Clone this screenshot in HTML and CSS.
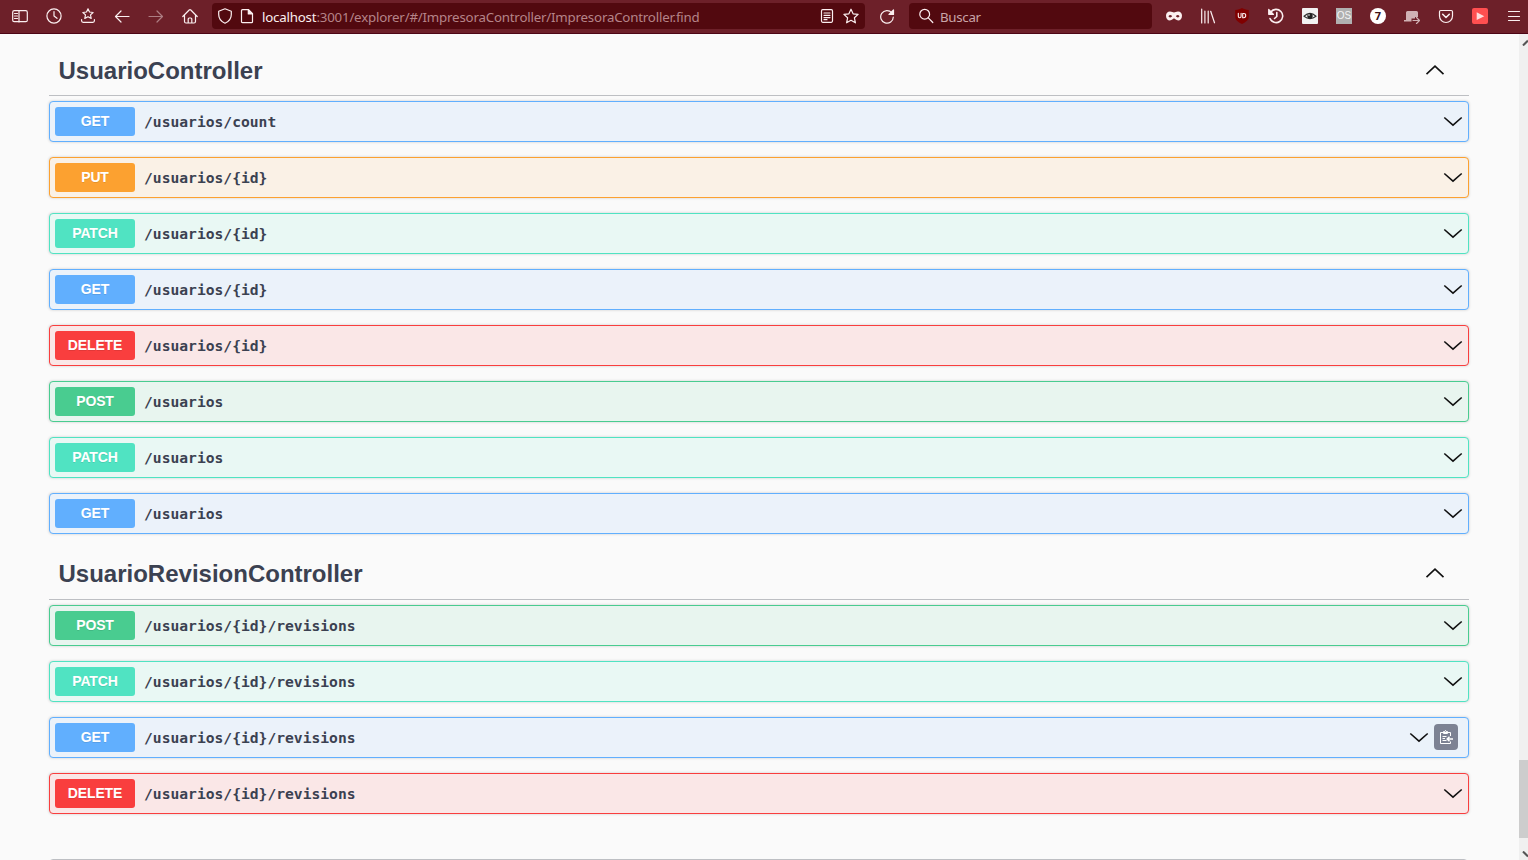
FILE: index.html
```
<!DOCTYPE html>
<html lang="es">
<head>
<meta charset="utf-8">
<title>LoopBack API Explorer</title>
<link rel="stylesheet" href="styles.css">
</head>
<body>
<svg class="defs" aria-hidden="true">
  <symbol id="down" viewBox="0 0 20 12"><path d="M1.300 1.500 10 9.200 18.700 1.500"/></symbol>
  <symbol id="up" viewBox="0 0 20 12"><path d="M1.500 10.200 10 2.200l8.500 8"/></symbol>
</svg>
<header class="toolbar">
  <nav class="tools">
    <span class="tool"><svg class="icon" viewBox="0 0 16 16"><rect x=".7" y="2.700" width="14.600" height="11" rx="1.500"/><path d="M7 3v11M2.500 5.500h3M2.500 8h3M2.500 10.500h3"/></svg></span>
    <span class="tool"><svg class="icon" viewBox="0 0 16 16"><circle cx="8" cy="8" r="7.100"/><path d="M8 3.500V8l3 2.300"/></svg></span>
    <span class="tool"><svg class="icon" viewBox="0 0 16 16"><path d="m8 .8 1.500 3.200 3.600.5-2.600 2.400.7 3.500L8 8.700l-3.200 1.700.7-3.500-2.600-2.400 3.600-.5zM1.600 11.500v1.300q0 1.500 1.500 1.500h9.800q1.500 0 1.500-1.500v-1.300"/></svg></span>
    <span class="tool"><svg class="icon" viewBox="0 0 16 16"><path d="M15 8.500H1.500M7 3 1.500 8.500 7 14"/></svg></span>
    <span class="tool tool-off"><svg class="icon" viewBox="0 0 16 16"><path d="M1 8.500h13.500M9 3l5.500 5.500L9 14"/></svg></span>
    <span class="tool"><svg class="icon" viewBox="0 0 16 16"><path d="M.8 8.500 7.200 2q.8-.7 1.600 0l6.400 6.500M2.500 7v6.500q0 1.500 1.500 1.500h8q1.500 0 1.500-1.500V7M6.200 15v-4q0-1 1-1h1.600q1 0 1 1v4"/></svg></span>
  </nav>
  <div class="address">
    <svg class="icon" viewBox="0 0 16 16"><path d="M8 .8 14.300 3.200v3.300c0 4-2.300 7-6.300 8.700-4-1.700-6.300-4.700-6.300-8.700V3.200z"/></svg>
    <svg class="icon page-icon" viewBox="0 0 16 16"><path d="M3.500 1.700h6l4 4v8q0 1-1 1h-9q-1 0-1-1v-11q0-1 1-1z"/><path class="solid" d="M9.300 1.700v4.200h4.200z"/></svg>
    <span class="url"><b>localhost</b>:3001/explorer/#/ImpresoraController/ImpresoraController.find</span>
    <svg class="icon" viewBox="0 0 16 16"><rect x="2.500" y="1.700" width="11" height="12.600" rx="1.200"/><path d="M5 5h6M5 7.300h6M5 9.600h6M5 11.700h3"/></svg>
    <svg class="icon star" viewBox="0 0 16 16"><path d="m8 1.200 2.100 4.600 5 .6-3.700 3.400 1 5L8 12.300l-4.400 2.500 1-5L.9 6.400l5-.6z"/></svg>
  </div>
  <span class="reload"><svg class="icon" viewBox="0 0 16 16"><path d="M12.800 4.800A6.300 6.300 0 1 0 14.300 9"/><path class="solid" d="M14.500 2v4.500H10z"/></svg></span>
  <div class="search">
    <svg class="icon" viewBox="0 0 16 16"><circle cx="6.700" cy="6.200" r="4.900"/><path d="m10.300 9.800 4.500 4.700"/></svg>
    <span>Buscar</span>
  </div>
  <nav class="tools extensions">
    <span class="tool"><svg class="icon" viewBox="0 0 16 16"><path class="mask" fill-rule="evenodd" d="M4 3.500c2 0 2.700 1 4 1s2-1 4-1c2.500 0 4 1.800 4 4.300 0 2.900-1.700 4.700-3.800 4.700C9.900 12.500 9.200 10.600 8 10.600S6.100 12.500 3.800 12.500C1.700 12.500 0 10.700 0 7.800 0 5.300 1.500 3.500 4 3.500zM2.400 8.200Q4.300 10.500 6.200 8.300 4.300 5.800 2.400 8.200zM9.800 8.300Q11.700 10.500 13.600 8.200 11.700 5.800 9.800 8.300z"/></svg></span>
    <span class="tool"><svg class="icon" viewBox="0 0 16 16"><path d="M1.700 1v14M4.900 3v12M8.200 3v12M10.700 3.300 14.500 14.800"/></svg></span>
    <span class="tool"><svg class="icon" viewBox="0 0 16 16"><path class="ublock" d="M8 0c2 1 4 1.800 6.800 2v6c0 4-2.500 5.800-6.800 8-4.300-2.200-6.800-4-6.800-8V2C4 1.800 6 1 8 0z"/><path class="thin" d="M4.300 5.300v3q0 1.500 1.400 1.500t1.400-1.500v-3M8.700 5.500v4.300h1q2 0 2-2.200t-2-2.100z"/></svg></span>
    <span class="tool"><svg class="icon" viewBox="0 0 16 16"><path class="bold" d="M2.800 4A6.600 6.600 0 1 1 2 10.500"/><path class="solid" d="M.7 1.500v4.800h4.800z"/><path class="bold" d="M8.800 4.500v4L6.500 10.500"/></svg></span>
    <span class="tool"><svg class="icon" viewBox="0 0 16 16"><rect class="eye-card" width="16" height="16" rx="1"/><path class="eye-line" d="M2 8.300Q8 2.500 14 8.300 8 13 2 8.300z"/><circle class="pupil" cx="8" cy="8" r="2.700"/><circle class="glint" cx="7" cy="7" r=".8"/></svg></span>
    <span class="tool"><span class="badge-os">OS</span></span>
    <span class="tool"><span class="badge-seven">7</span></span>
    <span class="tool"><svg class="icon faded" viewBox="0 0 16 16"><path class="mask" d="M2 4.500q0-1.500 1.500-1.500h9Q14 3 14 4.500V9h-3v1.500H7.500v3H0V12h2z"/><path d="M9 12.500h6M12.500 9.500l3 3-3 3"/></svg></span>
    <span class="tool"><svg class="icon" viewBox="0 0 16 16"><path d="M2.800 2.500h10.400q1.300 0 1.300 1.300V8a6.500 6.500 0 0 1-13 0V3.800q0-1.300 1.300-1.300z"/><path class="bold" d="M4.700 6.300 8 9.500l3.300-3.200"/></svg></span>
    <span class="tool"><svg class="icon" viewBox="0 0 16 16"><rect class="play-box" width="16" height="16" rx="2"/><path class="play" d="m4.700 4.300 7.600 3.900-7.600 3.900z"/></svg></span>
    <span class="tool"><svg class="icon" viewBox="0 0 16 16"><path d="M2.500 3.500h11M2.500 8.500h11M2.500 12.500h11"/></svg></span>
  </nav>
</header>
<div class="viewport">
  <main class="explorer">
    <section class="group">
      <h2 class="group-title">UsuarioController<svg class="arrow"><use href="#up"/></svg></h2>
      <div class="op get"><span class="method">GET</span><span class="path">/usuarios/count</span><svg class="arrow"><use href="#down"/></svg></div>
      <div class="op put"><span class="method">PUT</span><span class="path">/usuarios/{id}</span><svg class="arrow"><use href="#down"/></svg></div>
      <div class="op patch"><span class="method">PATCH</span><span class="path">/usuarios/{id}</span><svg class="arrow"><use href="#down"/></svg></div>
      <div class="op get"><span class="method">GET</span><span class="path">/usuarios/{id}</span><svg class="arrow"><use href="#down"/></svg></div>
      <div class="op delete"><span class="method">DELETE</span><span class="path">/usuarios/{id}</span><svg class="arrow"><use href="#down"/></svg></div>
      <div class="op post"><span class="method">POST</span><span class="path">/usuarios</span><svg class="arrow"><use href="#down"/></svg></div>
      <div class="op patch"><span class="method">PATCH</span><span class="path">/usuarios</span><svg class="arrow"><use href="#down"/></svg></div>
      <div class="op get"><span class="method">GET</span><span class="path">/usuarios</span><svg class="arrow"><use href="#down"/></svg></div>
    </section>
    <section class="group">
      <h2 class="group-title">UsuarioRevisionController<svg class="arrow"><use href="#up"/></svg></h2>
      <div class="op post"><span class="method">POST</span><span class="path">/usuarios/{id}/revisions</span><svg class="arrow"><use href="#down"/></svg></div>
      <div class="op patch"><span class="method">PATCH</span><span class="path">/usuarios/{id}/revisions</span><svg class="arrow"><use href="#down"/></svg></div>
      <div class="op get"><span class="method">GET</span><span class="path">/usuarios/{id}/revisions</span><svg class="arrow"><use href="#down"/></svg><span class="copy"><svg viewBox="0 0 16 16"><path d="M12.500 7V3.500H2.500v11h10v-2M5.500 4.500V2.500h1.300Q7.500.2 8.200 2.500h1.300v2zM4.500 7.500h4M4.500 9.500h2.500M4.500 11.500h4"/><path class="copy-arrow" d="M15 10H9.500M11.500 7.700 9.200 10l2.300 2.300"/></svg></span></div>
      <div class="op delete"><span class="method">DELETE</span><span class="path">/usuarios/{id}/revisions</span><svg class="arrow"><use href="#down"/></svg></div>
    </section>
    <div class="models"></div>
  </main>
  <aside class="scrollbar">
    <svg class="scroll-arrow" viewBox="0 0 9 9"><path d="M4 8.500 9 3.500"/></svg>
    <div class="thumb"></div>
    <svg class="scroll-arrow" viewBox="0 0 9 9"><path d="M4 .5 9 5.500"/></svg>
  </aside>
</div>
</body>
</html>
```
FILE: styles.css
```
* { box-sizing: border-box; }
body {
  margin: 0;
  height: 860px;
  overflow: hidden;
  display: flex;
  flex-direction: column;
  background: #fafafa;
  color: #3b4151;
  font-family: "Liberation Sans", Arial, sans-serif;
}
.defs { display: none; }

.toolbar {
  flex: none;
  height: 34px;
  padding: 0 0 1px 3px;
  display: flex;
  align-items: center;
  background: #6d2029;
  border-bottom: 1px solid #4c0515;
  color: #fbeff0;
  font-family: "Noto Sans", "Open Sans", sans-serif;
  font-size: 13.3px;
}
.toolbar > * { flex: none; }
.tools { display: flex; }
.tool {
  flex: none;
  width: 34px;
  height: 32px;
  display: flex;
  align-items: center;
  justify-content: center;
}
.tool-off { opacity: .45; }
.icon {
  flex: none;
  width: 16px;
  height: 16px;
  fill: none;
  stroke: currentColor;
  stroke-width: 1.2;
  stroke-linecap: round;
  stroke-linejoin: round;
}
.solid, .mask { fill: currentColor; }
.mask { stroke: none; }
.bold { stroke-width: 1.6; }
.thin { stroke-width: 1.1; }
.faded { opacity: .7; }
.ublock { fill: #800000; stroke: none; }
.eye-card { fill: #f2f2f2; stroke: none; }
.eye-line { stroke: #333; }
.pupil { fill: #222; stroke: none; }
.glint { fill: #fff; stroke: none; }
.play-box { fill: #ff4f50; stroke: none; }
.play { fill: #ffdcdc; stroke: none; }
.address, .search {
  height: 26px;
  display: flex;
  align-items: center;
  border-radius: 4px;
  background: #52090f;
}
.address { width: 653px; margin-left: 5px; padding: 0 6px 0 5px; }
.address .page-icon { margin-left: 6px; }
.url {
  flex: 1;
  margin-left: 7px;
  padding-top: 1px;
  white-space: nowrap;
  color: #b58489;
  letter-spacing: -.2px;
}
.url b { font-weight: 400; color: #fbeff0; }
.star { margin-left: 8px; }
.reload { width: 44px; display: flex; justify-content: center; }
.search {
  width: 243px;
  padding-left: 9px;
  gap: 6px;
}
.search span { padding-top: 1px; color: #c9a5a8; letter-spacing: -.3px; }
.extensions { margin-left: 5px; }
.badge-os {
  width: 16px;
  height: 16px;
  background: #b0b0b0;
  color: #f4f4f4;
  font: 10px/16px "Liberation Sans", sans-serif;
  text-align: center;
}
.badge-seven {
  width: 16px;
  height: 16px;
  border-radius: 50%;
  background: #fff;
  color: #3c1116;
  font: bold 11px/16px "Open Sans", sans-serif;
  text-align: center;
}

.viewport { flex: 1; min-height: 0; display: flex; }
.explorer { flex: 1; padding: 12px 50px 0 49px; }
.group { display: flex; flex-direction: column; gap: 15px; }
.group + .group { margin-top: 15px; }
.group-title {
  height: 50px;
  margin: 0 0 -10px;
  padding: 0 24px 0 9.5px;
  display: flex;
  align-items: center;
  justify-content: space-between;
  border-bottom: 1px solid #bdbfc3;
  font-size: 24px;
  line-height: 28px;
}
.group + .group .group-title { height: 51px; }
.arrow {
  flex: none;
  width: 20px;
  height: 12px;
  fill: none;
  stroke: #111;
  stroke-width: 1.6;
}
.group-title .arrow { margin-bottom: 2px; }
.op {
  height: 41px;
  padding: 5px;
  display: flex;
  align-items: center;
  border: 1px solid;
  border-radius: 4px;
  box-shadow: 0 0 3px rgba(0, 0, 0, .19);
}
.method {
  width: 80px;
  height: 29px;
  border-radius: 3px;
  color: #fff;
  font-size: 14px;
  font-weight: 700;
  letter-spacing: -.15px;
  line-height: 28px;
  text-align: center;
  text-shadow: 0 1px 0 rgba(0, 0, 0, .1);
}
.path {
  flex: 1;
  padding: 0 0 0 9px;
  font: bold 14.65px/20px "DejaVu Sans Mono", monospace;
}
.get { background: #ebf2fa; border-color: #61affe; }
.get .method { background: #61affe; }
.put { background: #faf1e6; border-color: #fca130; }
.put .method { background: #fca130; }
.patch { background: #e9f8f4; border-color: #50e3c2; }
.patch .method { background: #50e3c2; }
.delete { background: #fae7e7; border-color: #f93e3e; }
.delete .method { background: #f93e3e; }
.post { background: #e8f5ef; border-color: #49cc90; }
.post .method { background: #49cc90; }
.copy {
  width: 24px;
  height: 26px;
  margin: 0 5px 1px;
  display: flex;
  align-items: center;
  justify-content: center;
  border-radius: 4px;
  background: #7d8293;
}
.copy svg {
  width: 16px;
  height: 16px;
  fill: none;
  stroke: #fff;
  stroke-width: 1;
}
.copy .copy-arrow { stroke-width: 1.5; }
.models {
  height: 20px;
  margin: 45px 1px 0 0;
  border: 1px solid #bdbfc3;
  border-radius: 4px;
}
.scrollbar {
  width: 9px;
  display: flex;
  flex-direction: column;
  background: #f0f0f0;
}
.scroll-arrow {
  flex: none;
  width: 9px;
  height: 9px;
  margin: 3px 0 10px;
  fill: none;
  stroke: #555;
  stroke-width: 2;
}
.thumb { height: 78px; margin-top: auto; background: #cdcdcd; }
.thumb + .scroll-arrow { margin: 13px 0 0; }
```
